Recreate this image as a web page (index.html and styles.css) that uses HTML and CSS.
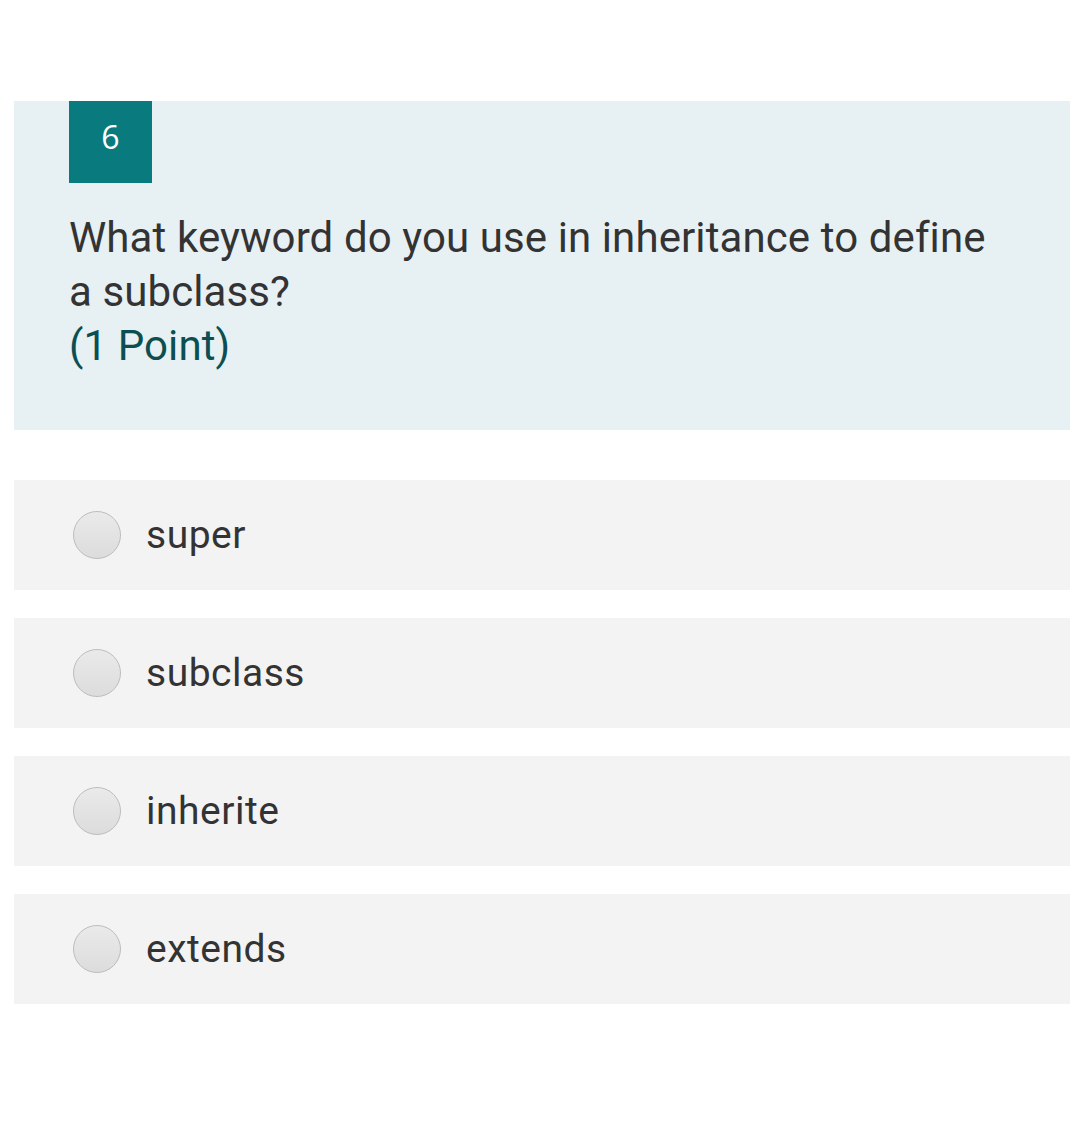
FILE: index.html
```html
<!DOCTYPE html>
<html lang="en">
<head>
  <meta charset="UTF-8" />
  <title>Question 6</title>
  <link rel="stylesheet" href="styles.css">
</head>
<body>
  <div class="quiz">

    <!-- Question header -->
    <div class="question">
      <div class="number">6</div>
      <div class="title">
        What keyword do you use in inheritance to define a subclass?
        <span class="points">(1 Point)</span>
      </div>
    </div>

    <!-- Answer choices -->
    <div class="choices" role="radiogroup">
      <label class="choice"><span class="radio"></span><span class="label">super</span></label>
      <label class="choice"><span class="radio"></span><span class="label">subclass</span></label>
      <label class="choice"><span class="radio"></span><span class="label">inherite</span></label>
      <label class="choice"><span class="radio"></span><span class="label">extends</span></label>
    </div>

  </div>
</body>
</html>
```

FILE: styles.css
```css
/* Reset */
* {
  margin: 0; padding: 0; box-sizing: border-box;
}
html, body {
  background: #fff;
  font-family: Roboto, "Liberation Sans", sans-serif;
  color: #333;
}
.quiz {
  padding: 101px 10px 0 14px;
}

/* Question card */
.question {
  background: #e7f0f3;
  padding: 0 55px 57px 55px;
}
.number {
  width: 83px;
  height: 82px;
  background: #097a7d;
  color: #fff;
  font-family: "Open Sans", "Noto Sans", sans-serif;
  font-size: 32px;
  display: flex;
  align-items: center;
  justify-content: center;
  padding-bottom: 12px;
}
.title {
  margin-top: 28px;
  font-size: 42px;
  letter-spacing: 0.1px;
  line-height: 54px;
  color: #333;
  max-width: 930px;
}
.points {
  display: block;
  color: #0b4f52;
}

/* Choices */
.choices {
  margin-top: 50px;
  display: flex;
  flex-direction: column;
  gap: 28px;
}
.choice {
  height: 110px;
  background: #f3f3f3;
  display: flex;
  align-items: center;
  padding-left: 59px;
  gap: 25px;
}
.radio {
  width: 48px;
  height: 48px;
  border-radius: 50%;
  border: 1.5px solid #bdbdbd;
  background: linear-gradient(#eaeaea, #dcdcdc);
  flex-shrink: 0;
}
.label {
  font-size: 39px;
  letter-spacing: 0.5px;
  color: #333;
}
```
